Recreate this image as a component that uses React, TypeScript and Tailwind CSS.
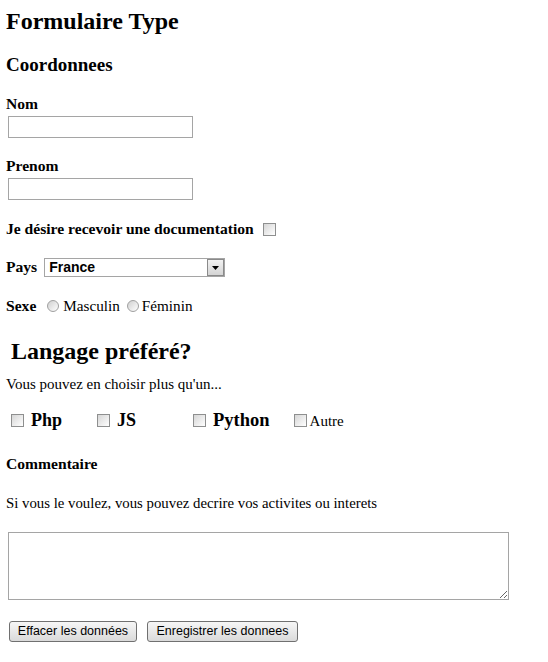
const serif = { fontFamily: '"Liberation Serif", "Times New Roman", serif' };

// fake IE-style checkbox
const Box = ({ className = "" }: { className?: string }) => (
  <span className={`inline-block w-[13px] h-[13px] border border-[#8e8f8f] bg-gradient-to-br from-[#d6d6d6] to-white shrink-0 ${className}`} />
);

const Radio = ({ className = "" }: { className?: string }) => (
  <span className={`inline-block w-[12px] h-[12px] rounded-full border border-[#a0a0a0] bg-gradient-to-br from-[#d0d0d0] to-white shrink-0 ${className}`} />
);

export default function App() {
  return (
    <div className="min-h-[662px] bg-white text-black pl-[6px]" style={serif}>
      <h1 className="mt-[7px] text-[24px] leading-[28px] font-bold">Formulaire Type</h1>

      <h2 className="mt-[19px] text-[19px] leading-[22px] font-bold">Coordonnees</h2>

      {/* nom / prenom */}
      <p className="mt-[19px] text-[15.6px] leading-[18px] font-bold">Nom</p>
      <input type="text" className="mt-[3px] ml-[2px] block w-[185px] h-[22px] border border-[#a5a5a5] outline-none" />

      <p className="mt-[19px] text-[15.6px] leading-[18px] font-bold">Prenom</p>
      <input type="text" className="mt-[3px] ml-[2px] block w-[185px] h-[22px] border border-[#a5a5a5] outline-none" />

      <div className="mt-[20px] flex items-center h-[18px]">
        <span className="text-[15.6px] leading-[18px] font-bold">Je désire recevoir une documentation</span>
        <Box className="ml-[9px]" />
      </div>

      <div className="mt-[20px] flex items-start">
        <span className="text-[15.6px] leading-[18px] font-bold">Pays</span>
        <div className="ml-[7px] flex w-[181px] h-[19px] border border-[#a5a5a5]">
          <span className="flex-1 pl-[4px] text-[14px] leading-[17px] font-bold" style={{ fontFamily: '"Liberation Sans", Arial, sans-serif' }}>
            France
          </span>
          <span className="w-[17px] h-[17px] border border-[#8a8a8a] bg-gradient-to-b from-[#f2f2f2] to-[#d4d4d4] flex items-center justify-center">
            <svg width="7" height="4" viewBox="0 0 7 4">
              <path d="M0 0h7L3.5 4z" fill="#000" />
            </svg>
          </span>
        </div>
      </div>

      <div className="mt-[20px] flex items-center h-[18px] text-[15.2px] leading-[18px]">
        <span className="text-[15.6px] font-bold">Sexe</span>
        <Radio className="ml-[11px]" />
        <span className="ml-[4px]">Masculin</span>
        <Radio className="ml-[7px]" />
        <span className="ml-[3px]">Féminin</span>
      </div>

      {/* langages */}
      <h2 className="mt-[22px] ml-[5px] text-[24px] leading-[28px] font-bold">Langage préféré?</h2>

      <p className="mt-[10px] text-[15px] leading-[18px]">Vous pouvez en choisir plus qu'un...</p>

      <div className="mt-[17px] flex items-center h-[21px] pl-[5px]">
        <Box />
        <span className="ml-[7px] text-[18px] leading-[21px] font-bold">Php</span>
        <Box className="ml-[35px]" />
        <span className="ml-[7px] text-[18px] leading-[21px] font-bold">JS</span>
        <Box className="ml-[57px]" />
        <span className="ml-[7px] text-[18.5px] leading-[21px] font-bold">Python</span>
        <Box className="ml-[24px]" />
        <span className="ml-[3px] text-[15px] leading-[18px]">Autre</span>
      </div>

      {/* commentaire */}
      <p className="mt-[24px] text-[15.6px] leading-[18px] font-bold">Commentaire</p>

      <p className="mt-[21px] text-[14.8px] leading-[18px]">Si vous le voulez, vous pouvez decrire vos activites ou interets</p>

      <textarea className="mt-[20px] ml-[2px] block w-[501px] h-[68px] border border-[#a5a5a5] outline-none" />

      <div className="mt-[21px] ml-[3px] flex gap-[10px] text-[12.5px]" style={{ fontFamily: '"Liberation Sans", Arial, sans-serif' }}>
        <button className="w-[128px] h-[21px] border border-[#707070] rounded-[3px] bg-gradient-to-b from-[#f6f6f6] to-[#dadada]">
          Effacer les données
        </button>
        <button className="w-[151px] h-[21px] border border-[#707070] rounded-[3px] bg-gradient-to-b from-[#f6f6f6] to-[#dadada]">
          Enregistrer les donnees
        </button>
      </div>
    </div>
  );
}
